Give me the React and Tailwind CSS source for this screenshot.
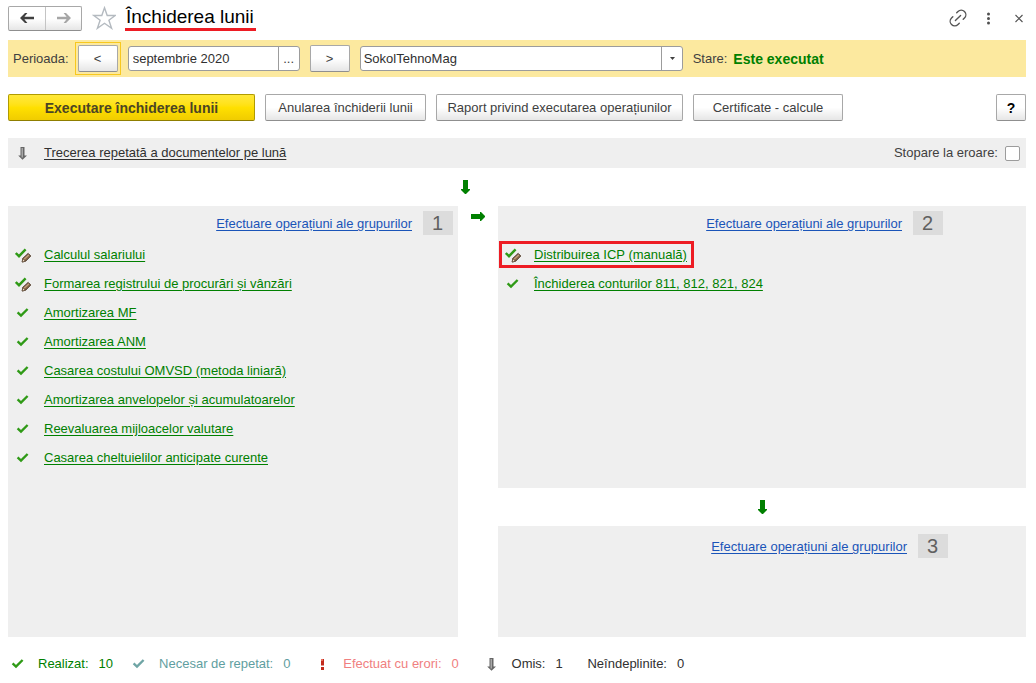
import { useState } from "react";
import clsx from "clsx";
import { Link2 } from "lucide-react";

const firstGroup = [
  { title: "Calculul salariului", manual: true },
  { title: "Formarea registrului de procurări și vânzări", manual: true },
  { title: "Amortizarea MF" },
  { title: "Amortizarea ANM" },
  { title: "Casarea costului OMVSD (metoda liniară)" },
  { title: "Amortizarea anvelopelor și acumulatoarelor" },
  { title: "Reevaluarea mijloacelor valutare" },
  { title: "Casarea cheltuielilor anticipate curente" },
];

const secondGroup = [
  { title: "Distribuirea ICP (manuală)", manual: true, highlighted: true },
  { title: "Închiderea conturilor 811, 812, 821, 824" },
];

const CheckIcon = ({ color = "#2f9a16" }) => (
  <svg width="16" height="16" viewBox="0 0 16 16" fill="none" className="shrink-0">
    <path d="M2.6 7.4L6 10.6L12.6 4" stroke={color} strokeWidth="2.4" />
  </svg>
);

const ManualCheckIcon = () => (
  <svg width="16" height="16" viewBox="0 0 16 16" fill="none" className="shrink-0">
    <path d="M0.8 6L4 9.2L10.6 2.4" stroke="#2f9a16" strokeWidth="2.4" />
    <path d="M7.2 15L7.8 11.4L13.2 6.4L15.7 9L10.6 14.2Z" fill="#8b6b4c" stroke="#4a3524" strokeWidth="1" />
    <path d="M9.2 12.2L13.8 7.8" stroke="#c9a685" strokeWidth="1.1" />
    <path d="M7.2 15L7.8 11.6L10.4 14.2Z" fill="#f3dfc8" stroke="#4a3524" strokeWidth="0.6" />
  </svg>
);

const SkippedIcon = () => (
  <svg width="16" height="16" viewBox="0 0 16 16" className="shrink-0">
    <path d="M5.5 2H9.5V10.5H12L7.5 14.8L3.2 10.5H5.5Z" fill="#666" />
    <path d="M7.2 3V12.5" stroke="#b8b8b8" strokeWidth="1.2" />
  </svg>
);

const ErrorIcon = () => (
  <svg width="16" height="16" viewBox="0 0 16 16" className="shrink-0">
    <path d="M6 3H9V9.5H6ZM6 11H9V14H6Z" fill="#c22a1c" />
    <path d="M6 3H8V5H6Z" fill="#e8705f" />
  </svg>
);

const DownArrow = () => (
  <svg width="9" height="14" viewBox="0 0 9 14" className="block">
    <path d="M2 0H7V9H9V10L5 14H4L0 10V9H2Z" fill="#008000" />
  </svg>
);

const RightArrow = () => (
  <svg width="14" height="9" viewBox="0 0 14 9" className="block">
    <path d="M0 2V7H9V9H10L14 5V4L10 0H9V2Z" fill="#008000" />
  </svg>
);

const NavArrow = ({ color, flipped }) => (
  <svg width="14" height="12" viewBox="0 0 14 12" className={clsx(flipped && "-scale-x-100")}>
    <path d="M0 6L5 1H7.4L4.4 4.8H14V7.2H4.4L7.4 11H5Z" fill={color} />
  </svg>
);

const Button = ({ children, className }) => (
  <button
    type="button"
    className={clsx(
      "flex h-[27px] items-center justify-center rounded-xs border border-[#a8a8a8] border-b-[#8f8f8f] bg-linear-to-b from-white from-50% to-[#e6e6e6] whitespace-nowrap",
      className
    )}
  >
    {children}
  </button>
);

const GroupHeader = ({ number, className }) => (
  <div className={clsx("flex items-end justify-end gap-[11px]", className)}>
    <a href="#" className="leading-[22px] text-[#1a54b8] underline underline-offset-2">
      Efectuare operațiuni ale grupurilor
    </a>
    <span className="h-6 w-[30px] bg-[#dcdcdc] pr-px text-center text-xl leading-6 text-[#606060]">
      {number}
    </span>
  </div>
);

const OperationList = ({ items }) => (
  <ul className="mt-[5px]">
    {items.map((item) => (
      <li key={item.title} className="flex h-[29px] items-center">
        <div
          className={clsx(
            "ml-px flex h-[27px] items-center gap-3 pr-[7px] pl-[6px]",
            item.highlighted && "shadow-[inset_0_0_0_3px_#ed1c24]"
          )}
        >
          {item.manual ? <ManualCheckIcon /> : <CheckIcon />}
          <a href="#" className="pl-px text-[#008000] underline underline-offset-2">
            {item.title}
          </a>
        </div>
      </li>
    ))}
  </ul>
);

const StatusItem = ({ icon, label, value, className }) => (
  <div className={clsx("flex items-center", className)}>
    {icon && <span className="mr-3">{icon}</span>}
    <span>{label}</span>
    <span className="ml-[10px] min-w-[14px]">{value}</span>
  </div>
);

const App = () => {
  const [period, setPeriod] = useState("septembrie 2020");
  const [stopOnError, setStopOnError] = useState(false);

  return (
    <div className="bg-white pt-1 pr-[10px] pb-2 pl-2 font-['Liberation_Sans',Arial,sans-serif] text-[13px] leading-4 text-[#404040]">
      <header className="flex h-7 items-center">
        <div className="flex h-[25px] rounded-xs border border-[#a8a8a8] border-b-[#8f8f8f] bg-linear-to-b from-white from-50% to-[#e6e6e6]">
          <button type="button" aria-label="Înapoi" className="flex w-[37px] items-center justify-center border-r border-[#c4c4c4]">
            <NavArrow color="#404040" />
          </button>
          <button type="button" aria-label="Înainte" className="flex w-[35px] items-center justify-center">
            <NavArrow color="#a6a6a6" flipped />
          </button>
        </div>
        <button type="button" aria-label="Favorite" className="ml-[10px]">
          <svg width="24" height="24" viewBox="0 0 24 24" className="block">
            <path
              d="M12.5 1.8L15.2 9.5H23.2L16.9 14.2L19.6 22.3L12.5 17.3L5.4 22.3L8.1 14.2L1.8 9.5H9.8Z"
              fill="#fff"
              stroke="#b4bac0"
              strokeWidth="1.4"
            />
          </svg>
        </button>
        <h1 className="ml-[9px] border-b-3 border-[#ed1c24] pr-[2px] pl-px text-[19px] leading-[22px] text-black">
          Închiderea lunii
        </h1>
        <div className="ml-auto flex items-center pr-px">
          <button type="button" aria-label="Link">
            <Link2 size={22} strokeWidth={1.5} className="-rotate-45 text-[#555]" />
          </button>
          <button type="button" aria-label="Mai mult" className="ml-[14px]">
            <svg width="11" height="13" viewBox="0 0 11 13" fill="#505050" className="block">
              <circle cx="5.5" cy="2" r="1.5" />
              <circle cx="5.5" cy="6.5" r="1.5" />
              <circle cx="5.5" cy="11" r="1.5" />
            </svg>
          </button>
          <button type="button" aria-label="Închide" className="ml-5">
            <svg width="11" height="11" viewBox="0 0 11 11" stroke="#505050" strokeWidth="1.1" className="block">
              <path d="M1.5 2L8.5 9M8.5 2L1.5 9" />
            </svg>
          </button>
        </div>
      </header>

      <section className="mt-2 flex h-[37px] items-center bg-[#fce99f] pl-[5px]">
        <label htmlFor="period">Perioada:</label>
        <div className="ml-[6px] border border-[#f8c81e] p-[2px]">
          <Button className="w-10">&lt;</Button>
        </div>
        <div className="ml-[7px] flex h-[25px] w-[172px] rounded-[3px] border border-[#9c9c9c] bg-white">
          <input
            id="period"
            type="text"
            value={period}
            onChange={(e) => setPeriod(e.target.value)}
            className="min-w-0 flex-1 px-1 text-[#303030] outline-none"
          />
          <button type="button" aria-label="Alege perioada" className="w-[21px] border-l border-[#9c9c9c]">
            ...
          </button>
        </div>
        <Button className="ml-[10px] w-10">&gt;</Button>
        <div className="relative ml-[10px] h-[25px] w-[323px]">
          <select
            aria-label="Organizația"
            className="h-full w-full appearance-none rounded-[3px] border border-[#9c9c9c] bg-white pr-6 pl-[3px] text-[#303030] outline-none"
          >
            <option>SokolTehnoMag</option>
          </select>
          <span className="pointer-events-none absolute inset-y-0 right-0 flex w-[22px] items-center justify-center border-l border-[#9c9c9c]">
            <svg width="5" height="3" viewBox="0 0 5 3">
              <path d="M0 0H5L2.5 3Z" fill="#404040" />
            </svg>
          </span>
        </div>
        <span className="ml-[10px]">Stare:</span>
        <strong className="ml-[6px] text-sm leading-4 text-[#008000]">Este executat</strong>
      </section>

      <section className="mt-[17px] flex gap-[10px]">
        <button
          type="button"
          className="h-[27px] w-[247px] rounded-xs border border-[#b09b00] border-b-[#8f7e00] bg-linear-to-b from-[#ffe838] via-[#ffe000] to-[#f0cc00] text-sm font-bold whitespace-nowrap text-[#4b4526]"
        >
          Executare închiderea lunii
        </button>
        <Button className="w-[161px]">Anularea închiderii lunii</Button>
        <Button className="w-[247px]">Raport privind executarea operațiunilor</Button>
        <Button className="w-[150px]">Certificate - calcule</Button>
        <Button className="ml-auto w-[30px] text-sm font-bold text-black">?</Button>
      </section>

      <section className="mt-[17px] flex h-[30px] items-center bg-[#efefef] pr-[6px] pl-[7px]">
        <SkippedIcon />
        <a href="#" className="ml-[13px] text-[#303030] underline underline-offset-2">
          Trecerea repetată a documentelor pe lună
        </a>
        <label htmlFor="stop-on-error" className="ml-auto">
          Stopare la eroare:
        </label>
        <input
          id="stop-on-error"
          type="checkbox"
          checked={stopOnError}
          onChange={(e) => setStopOnError(e.target.checked)}
          className="ml-[7px] size-[15px] appearance-none rounded-xs border border-[#9c9c9c] bg-white checked:bg-[#008000]"
        />
      </section>

      <main className="grid grid-cols-[450fr_40px_528fr]">
        <div className="col-start-2 flex h-[38px] items-center pl-[3px]">
          <DownArrow />
        </div>
        <section className="col-start-1 row-start-2 bg-[#efefef]">
          <GroupHeader number={1} className="pt-[5px] pr-[5px]" />
          <OperationList items={firstGroup} />
        </section>
        <div className="row-start-2 pt-[6px] pl-[13px]">
          <RightArrow />
        </div>
        <div className="row-start-2 flex flex-col">
          <section className="min-h-[282px] bg-[#efefef]">
            <GroupHeader number={2} className="pt-[5px] pr-[83px]" />
            <OperationList items={secondGroup} />
          </section>
          <div className="flex h-[38px] items-center justify-center">
            <DownArrow />
          </div>
          <section className="min-h-[111px] bg-[#efefef]">
            <GroupHeader number={3} className="pt-2 pr-[78px]" />
          </section>
        </div>
      </main>

      <footer className="mt-[19px] flex items-center gap-[18px] pl-[2px]">
        <StatusItem icon={<CheckIcon />} label="Realizat:" value={10} className="text-[#008000]" />
        <StatusItem
          icon={<CheckIcon color="#6fa5a5" />}
          label="Necesar de repetat:"
          value={0}
          className="text-[#5f9ea0]"
        />
        <StatusItem icon={<ErrorIcon />} label="Efectuat cu erori:" value={0} className="text-[#f08080]" />
        <StatusItem icon={<SkippedIcon />} label="Omis:" value={1} className="text-[#303030]" />
        <StatusItem label="Neîndeplinite:" value={0} className="text-[#303030]" />
      </footer>
    </div>
  );
};

export default App;
